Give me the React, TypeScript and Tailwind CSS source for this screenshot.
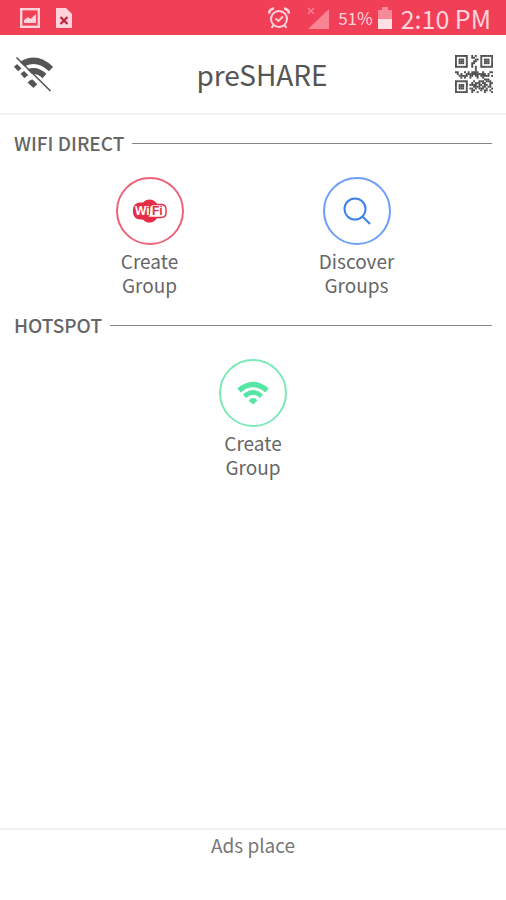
import type { ReactNode } from "react";

const QR_ROWS = [
    "1111111..1.1..1111111",
    "1000001..11...1000001",
    "1011101....11.1011101",
    "1011101...11..1011101",
    "1011101..11...1011101",
    "1000001..1....1000001",
    "1111111..1.1..1111111",
    "...........1.........",
    "...........1.........",
    "11...1.1.1111..1...11",
    ".1.1..11111111111.1..",
    "..11111.11.11.11111.1",
    "...1.1..1...1..1.....",
    "................111..",
    "1111111...1..111.111.",
    "1000001..1.111.11..11",
    "1011101.1111.11.11.1.",
    "1011101...1111.11.11.",
    "1011101.11.1.111.1..1",
    "1000001..11...1.11.1.",
    "1111111..1..1...1...1",
];

const QrIcon = () => (
    <svg viewBox="0 0 21 21" className="h-[38px] w-[38px] fill-[#4a4a4a]" aria-hidden="true">
        {QR_ROWS.map((row, y) =>
            row.split("").map((cell, x) =>
                cell === "1" ? <rect key={`${x}-${y}`} x={x} y={y} width="1.05" height="1.05" /> : null
            )
        )}
    </svg>
);

const WifiOffIcon = () => (
    <svg viewBox="0 0 40 36" className="h-9 w-10" fill="none" aria-hidden="true">
        <path d="M3 13Q20.5 -3.5 38 13" stroke="#555" strokeWidth="6" />
        <path d="M9.5 20Q20.5 10 31.5 20" stroke="#555" strokeWidth="5.8" />
        <path d="M14.5 26.5Q20.5 19.5 26 26.5L20.5 32Z" fill="#555" />
        <path d="M1 2.5L34 35.5" stroke="#fff" strokeWidth="3.4" />
        <path d="M3.5 1.5L37.5 35" stroke="#555" strokeWidth="1.6" />
    </svg>
);

const WifiLogo = () => (
    <svg viewBox="0 0 36 24" className="h-6 w-9" aria-hidden="true">
        <ellipse cx="17.5" cy="12" rx="9.5" ry="11.5" fill="#e62d47" />
        <rect x="1" y="3.5" width="22" height="17" rx="7" fill="#e62d47" />
        <path d="M20 5.5H29Q34 5.5 34 10V14Q34 18.5 29 18.5H15.5Q17.5 16.5 17.5 13V9Q17.5 6.5 20 5.5Z" fill="#fff" stroke="#e62d47" strokeWidth="1.4" />
        <text x="3" y="16" fontSize="12" fontWeight="700" fill="#fff" fontFamily="Liberation Sans, sans-serif">Wi</text>
        <text x="20" y="16" fontSize="12" fontWeight="700" fill="#e62d47" fontFamily="Liberation Sans, sans-serif">Fi</text>
    </svg>
);

const SearchIcon = () => (
    <svg viewBox="0 0 30 30" className="h-[30px] w-[30px]" fill="none" stroke="#3b82ee" strokeWidth="2" aria-hidden="true">
        <circle cx="13" cy="13" r="10.5" />
        <path d="M20.5 20.5L28 28" />
    </svg>
);

const WifiIcon = () => (
    <svg viewBox="0 0 32 24" className="h-6 w-8" fill="none" aria-hidden="true">
        <path d="M2 9.5Q16 -2.5 30 9.5" stroke="#55e6a5" strokeWidth="5.2" />
        <path d="M7.5 15.2Q16 7.5 24.5 15.2" stroke="#55e6a5" strokeWidth="4.6" />
        <path d="M11.5 19.5Q16 14.5 20.5 19.5L16 23.5Z" fill="#55e6a5" />
    </svg>
);

const StatusBar = () => (
    <div className="flex h-[35px] items-center justify-between bg-[#f13f58] pr-[15px] pl-5 text-[#ffd3d9]">
        <div className="flex items-center gap-[15px]">
            <svg viewBox="0 0 20 20" className="h-5 w-5" aria-hidden="true">
                <rect x="1.2" y="1.2" width="17.6" height="17.6" fill="none" stroke="#ffd3d9" strokeWidth="2.4" />
                <path d="M4 15V12L8 9L10.5 11L16 6V15Z" fill="#ffd3d9" />
            </svg>
            <svg viewBox="0 0 18 22" className="h-[22px] w-[18px]" aria-hidden="true">
                <path d="M1 1H11L17 7V21H1Z" fill="#ffd3d9" />
                <path d="M5.5 10L12.5 17M12.5 10L5.5 17" stroke="#c3213c" strokeWidth="2.2" />
            </svg>
        </div>
        <div className="flex items-center">
            <svg viewBox="0 0 22 22" className="mr-4 h-[22px] w-[22px]" fill="none" stroke="#ffd3d9" strokeWidth="2" aria-hidden="true">
                <circle cx="11" cy="12" r="8" />
                <path d="M7.5 11.5L10.5 14L15 9.5M5.5 18L3.5 21M16.5 18L18.5 21" />
                <path d="M1 6.5Q1.5 2 6 1.5M21 6.5Q20.5 2 16 1.5" strokeWidth="2.6" />
            </svg>
            <svg viewBox="0 0 24 24" className="mr-2 h-6 w-6" aria-hidden="true">
                <path d="M23 3V23H2Z" fill="#f98494" />
                <path d="M2 2L8 8M8 2L2 8" stroke="#f98494" strokeWidth="1.4" />
            </svg>
            <span className="mr-1 text-[17px] leading-6">51%</span>
            <svg viewBox="0 0 16 24" className="mr-2 h-6 w-4" aria-hidden="true">
                <path d="M5 1H11V4H15V13H1V4H5Z" fill="#f78998" />
                <path d="M1 13H15V23H1Z" fill="#ffe1e5" />
            </svg>
            <span className="text-[25px] leading-8">2:10 PM</span>
        </div>
    </div>
);

const SectionTitle = ({ children }: { children: ReactNode }) => (
    <div className="flex items-center gap-2">
        <h2 className="text-[19px] leading-6 font-medium text-[#666]">{children}</h2>
        <div className="h-px flex-1 bg-[#888]" />
    </div>
);

interface ActionProps {
    icon: ReactNode;
    label: string;
    ringClass: string;
}

const Action = ({ icon, label, ringClass }: ActionProps) => (
    <button type="button" className="flex w-20 flex-col items-center gap-1 text-[#666]">
        <span className={`flex h-[68px] w-[68px] items-center justify-center rounded-full border-2 ${ringClass}`}>
            {icon}
        </span>
        <span className="text-[19px] leading-6">{label}</span>
    </button>
);

export default function App() {
    return (
        <div className="flex min-h-screen flex-col bg-white font-['Noto_Sans_CJK_SC','Open_Sans',sans-serif]">
            <StatusBar />
            <header className="flex items-center justify-between border-b-2 border-[#f1f1f1] px-[13px] py-5">
                <button type="button" aria-label="Wi-Fi off" className="w-14">
                    <WifiOffIcon />
                </button>
                <h1 className="text-[28px] leading-9 text-[#555]">preSHARE</h1>
                <button type="button" aria-label="QR code">
                    <QrIcon />
                </button>
            </header>

            <main className="flex flex-1 flex-col gap-4 px-[14px] pt-4">
                <section className="flex flex-col gap-[22px]">
                    <SectionTitle>WIFI DIRECT</SectionTitle>
                    <div className="grid grid-cols-2 justify-items-center px-8">
                        <Action icon={<WifiLogo />} label="Create Group" ringClass="border-[#ee6379]" />
                        <Action icon={<SearchIcon />} label="Discover Groups" ringClass="border-[#6d9ff5]" />
                    </div>
                </section>
                <section className="flex flex-col gap-[22px]">
                    <SectionTitle>HOTSPOT</SectionTitle>
                    <div className="flex justify-center">
                        <Action icon={<WifiIcon />} label="Create Group" ringClass="border-[#7ce9b8]" />
                    </div>
                </section>
            </main>

            <footer className="h-[72px] border-t-2 border-[#f0f0f0] pt-[3px] text-center text-[19px] leading-6 text-[#777]">
                Ads place
            </footer>
        </div>
    );
}
